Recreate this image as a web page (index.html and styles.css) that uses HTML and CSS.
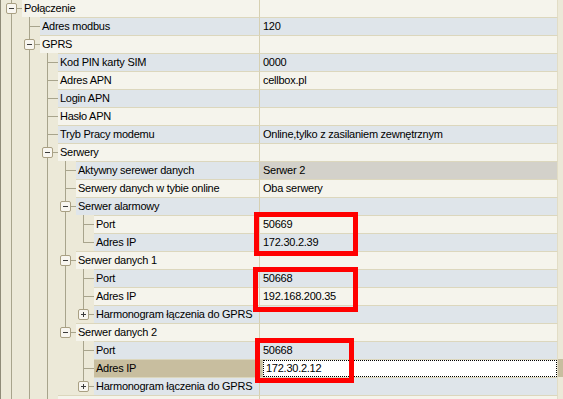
FILE: index.html
```html
<!DOCTYPE html>
<html lang="pl">
<head>
<meta charset="utf-8">
<title>Połączenie</title>
<link rel="stylesheet" href="styles.css">
</head>
<body>
<div class="view">
  <div class="tree">
    <div class="row a"><div class="gut"><span class="own tee"><svg class="exp" width="11" height="11"><rect x="0.5" y="0.5" width="10" height="10" rx="1.5" fill="#f8f6f0" stroke="#a9a083"/><path d="M3 5.5h5" stroke="#3c3c3c"/></svg></span></div><div class="name">Połączenie</div><div class="val"></div><div class="rest"></div></div>

    <div class="row b"><div class="gut"><span class="ind v"></span><span class="own tee"></span></div><div class="name">Adres modbus</div><div class="val">120</div><div class="rest"></div></div>

    <div class="row a"><div class="gut"><span class="ind v"></span><span class="own tee"><svg class="exp" width="11" height="11"><rect x="0.5" y="0.5" width="10" height="10" rx="1.5" fill="#f8f6f0" stroke="#a9a083"/><path d="M3 5.5h5" stroke="#3c3c3c"/></svg></span></div><div class="name">GPRS</div><div class="val"></div><div class="rest"></div></div>

    <div class="row b"><div class="gut"><span class="ind v"></span><span class="ind v"></span><span class="own tee"></span></div><div class="name">Kod PIN karty SIM</div><div class="val">0000</div><div class="rest"></div></div>

    <div class="row a"><div class="gut"><span class="ind v"></span><span class="ind v"></span><span class="own tee"></span></div><div class="name">Adres APN</div><div class="val">cellbox.pl</div><div class="rest"></div></div>

    <div class="row b"><div class="gut"><span class="ind v"></span><span class="ind v"></span><span class="own tee"></span></div><div class="name">Login APN</div><div class="val"></div><div class="rest"></div></div>

    <div class="row a"><div class="gut"><span class="ind v"></span><span class="ind v"></span><span class="own tee"></span></div><div class="name">Hasło APN</div><div class="val"></div><div class="rest"></div></div>

    <div class="row b"><div class="gut"><span class="ind v"></span><span class="ind v"></span><span class="own tee"></span></div><div class="name">Tryb Pracy modemu</div><div class="val">Online,tylko z zasilaniem zewnętrznym</div><div class="rest"></div></div>

    <div class="row a"><div class="gut"><span class="ind v"></span><span class="ind v"></span><span class="own tee"><svg class="exp" width="11" height="11"><rect x="0.5" y="0.5" width="10" height="10" rx="1.5" fill="#f8f6f0" stroke="#a9a083"/><path d="M3 5.5h5" stroke="#3c3c3c"/></svg></span></div><div class="name">Serwery</div><div class="val"></div><div class="rest"></div></div>

    <div class="row b"><div class="gut"><span class="ind v"></span><span class="ind v"></span><span class="ind v"></span><span class="own tee"></span></div><div class="name">Aktywny serewer danych</div><div class="val ro">Serwer 2</div><div class="rest"></div></div>

    <div class="row a"><div class="gut"><span class="ind v"></span><span class="ind v"></span><span class="ind v"></span><span class="own tee"></span></div><div class="name">Serwery danych w tybie online</div><div class="val">Oba serwery</div><div class="rest"></div></div>

    <div class="row b"><div class="gut"><span class="ind v"></span><span class="ind v"></span><span class="ind v"></span><span class="own tee"><svg class="exp" width="11" height="11"><rect x="0.5" y="0.5" width="10" height="10" rx="1.5" fill="#f8f6f0" stroke="#a9a083"/><path d="M3 5.5h5" stroke="#3c3c3c"/></svg></span></div><div class="name">Serwer alarmowy</div><div class="val"></div><div class="rest"></div></div>

    <div class="row a"><div class="gut"><span class="ind v"></span><span class="ind v"></span><span class="ind v"></span><span class="ind v"></span><span class="own tee"></span></div><div class="name">Port</div><div class="val">50669</div><div class="rest"></div></div>

    <div class="row b"><div class="gut"><span class="ind v"></span><span class="ind v"></span><span class="ind v"></span><span class="ind v"></span><span class="own elbow"></span></div><div class="name">Adres IP</div><div class="val">172.30.2.39</div><div class="rest"></div></div>

    <div class="row a"><div class="gut"><span class="ind v"></span><span class="ind v"></span><span class="ind v"></span><span class="own tee"><svg class="exp" width="11" height="11"><rect x="0.5" y="0.5" width="10" height="10" rx="1.5" fill="#f8f6f0" stroke="#a9a083"/><path d="M3 5.5h5" stroke="#3c3c3c"/></svg></span></div><div class="name">Serwer danych 1</div><div class="val"></div><div class="rest"></div></div>

    <div class="row b"><div class="gut"><span class="ind v"></span><span class="ind v"></span><span class="ind v"></span><span class="ind v"></span><span class="own tee"></span></div><div class="name">Port</div><div class="val">50668</div><div class="rest"></div></div>

    <div class="row a"><div class="gut"><span class="ind v"></span><span class="ind v"></span><span class="ind v"></span><span class="ind v"></span><span class="own tee"></span></div><div class="name">Adres IP</div><div class="val">192.168.200.35</div><div class="rest"></div></div>

    <div class="row b"><div class="gut"><span class="ind v"></span><span class="ind v"></span><span class="ind v"></span><span class="ind v"></span><span class="own elbow"><svg class="exp" width="11" height="11"><rect x="0.5" y="0.5" width="10" height="10" rx="1.5" fill="#f8f6f0" stroke="#a9a083"/><path d="M3 5.5h5M5.5 3v5" stroke="#3c3c3c"/></svg></span></div><div class="name">Harmonogram łączenia do GPRS</div><div class="val"></div><div class="rest"></div></div>

    <div class="row a"><div class="gut"><span class="ind v"></span><span class="ind v"></span><span class="ind v"></span><span class="own elbow"><svg class="exp" width="11" height="11"><rect x="0.5" y="0.5" width="10" height="10" rx="1.5" fill="#f8f6f0" stroke="#a9a083"/><path d="M3 5.5h5" stroke="#3c3c3c"/></svg></span></div><div class="name">Serwer danych 2</div><div class="val"></div><div class="rest"></div></div>

    <div class="row b"><div class="gut"><span class="ind v"></span><span class="ind v"></span><span class="ind v"></span><span class="ind"></span><span class="own tee"></span></div><div class="name">Port</div><div class="val">50668</div><div class="rest"></div></div>

    <div class="row sel"><div class="gut"><span class="ind v"></span><span class="ind v"></span><span class="ind v"></span><span class="ind"></span><span class="own tee"></span></div><div class="name">Adres IP</div><div class="val edit"><div class="editbox">172.30.2.12</div></div><div class="rest"></div></div>

    <div class="row b"><div class="gut"><span class="ind v"></span><span class="ind v"></span><span class="ind v"></span><span class="ind"></span><span class="own elbow"><svg class="exp" width="11" height="11"><rect x="0.5" y="0.5" width="10" height="10" rx="1.5" fill="#f8f6f0" stroke="#a9a083"/><path d="M3 5.5h5M5.5 3v5" stroke="#3c3c3c"/></svg></span></div><div class="name">Harmonogram łączenia do GPRS</div><div class="val"></div><div class="rest"></div></div>

    <div class="row a"><div class="gut"><span class="ind v"></span><span class="ind v"></span><span class="own tee"></span></div><div class="name"></div><div class="val"></div><div class="rest"></div></div>
  </div>

  <div class="mark m1"></div>
  <div class="mark m2"></div>
  <div class="mark m3"></div>
</div>
</body>
</html>
```

FILE: styles.css
```css
html, body {
  margin: 0;
  padding: 0;
  width: 563px;
  height: 399px;
  overflow: hidden;
  background: #ece9d8;
}

body {
  font-family: "Liberation Sans", Arial, sans-serif;
  font-size: 11px;
  letter-spacing: -0.25px;
  color: #000;
}

.view {
  position: relative;
  width: 563px;
  height: 399px;
  overflow: hidden;
  background:
    linear-gradient(#8f8b78, #8f8b78) no-repeat 0 0 / 1px 100%,
    #ece9d8;
}

.tree {
  display: flex;
  flex-direction: column;
  margin-top: -1px;
}

.row {
  display: flex;
  height: 18px;
  flex: none;
}

.gut {
  display: flex;
  flex: none;
  height: 18px;
}

.ind {
  width: 18px;
  height: 18px;
  flex: none;
}

.ind.v {
  background: linear-gradient(#a8a48c, #a8a48c) no-repeat 11px 0 / 1px 18px;
}

.own {
  width: 22px;
  height: 18px;
  flex: none;
  display: flex;
  align-items: flex-start;
}

.own.tee {
  background:
    linear-gradient(#a8a48c, #a8a48c) no-repeat 11px 0 / 1px 18px,
    linear-gradient(#a8a48c, #a8a48c) no-repeat 11px 9px / 11px 1px;
}

.own.elbow {
  background:
    linear-gradient(#a8a48c, #a8a48c) no-repeat 11px 0 / 1px 10px,
    linear-gradient(#a8a48c, #a8a48c) no-repeat 11px 9px / 11px 1px;
}

.exp {
  display: block;
  margin: 4px 0 0 6px;
}

.name {
  flex: 1;
  min-width: 0;
  height: 17px;
  line-height: 17px;
  padding-left: 2px;
  border-top: 1px solid #dcd7bd;
  border-right: 1px solid #d6d0b2;
  white-space: nowrap;
  overflow: hidden;
}

.val {
  width: 294px;
  flex: none;
  height: 17px;
  line-height: 17px;
  padding-left: 3px;
  border-top: 1px solid #dcd7bd;
  border-right: 1px solid #e2ddc6;
  white-space: nowrap;
  overflow: hidden;
}

.rest {
  width: 5px;
  flex: none;
  background: #ece9d8;
}

.row.a .name,
.row.a .val {
  background: #f5f4ec;
}

.row.b .name,
.row.b .val {
  background: #dfe5ea;
}

.row .val.ro {
  background: #d3d1ca;
}

.row.sel .name {
  background: #c8be9f;
}

.row.sel .rest {
  background: #c8be9f;
}

.val.edit {
  padding-left: 0;
  background: #fff;
}

.editbox {
  height: 15px;
  line-height: 15px;
  padding-left: 2px;
  border: 1px dotted #000;
  background: #fff;
}

.mark {
  position: absolute;
  box-sizing: border-box;
  border: 5px solid #ff0000;
}

.m1 {
  left: 254px;
  top: 212px;
  width: 104px;
  height: 44px;
}

.m2 {
  left: 253px;
  top: 267px;
  width: 105px;
  height: 45px;
}

.m3 {
  left: 255px;
  top: 338px;
  width: 99px;
  height: 45px;
}
```
